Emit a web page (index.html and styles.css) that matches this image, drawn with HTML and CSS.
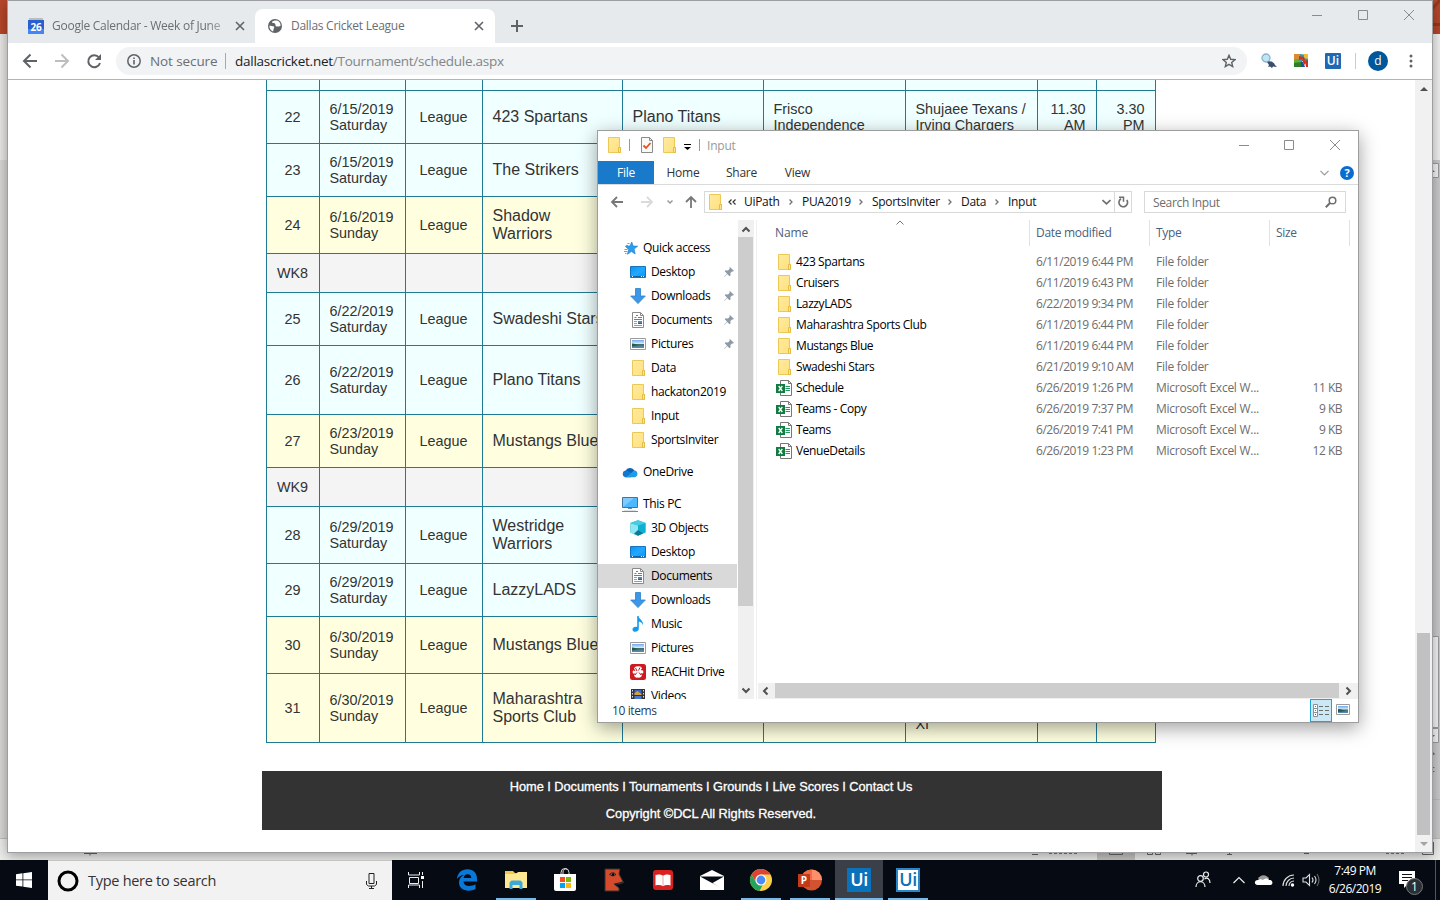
FILE: index.html
```html
<!DOCTYPE html>
<html lang="en">
<head>
<meta charset="utf-8">
<title>Dallas Cricket League</title>
<link rel="stylesheet" href="styles.css">
</head>
<body>
<svg width="0" height="0" class="defs">
  <defs>
    <linearGradient id="gFolder" x1="0" y1="0" x2="1" y2="1"><stop offset="0" stop-color="#ffeba0"/><stop offset="1" stop-color="#ffe07c"/></linearGradient>
    <linearGradient id="gBlue" x1="0" y1="0" x2="1" y2="1"><stop offset="0" stop-color="#0a93f5"/><stop offset=".5" stop-color="#22a8ff"/><stop offset="1" stop-color="#0c95f6"/></linearGradient>
    <linearGradient id="gSky" x1="0" y1="0" x2="0" y2="1"><stop offset="0" stop-color="#6fa8f0"/><stop offset=".45" stop-color="#d6e8f8"/><stop offset=".55" stop-color="#3f6f6a"/><stop offset="1" stop-color="#5b8fb8"/></linearGradient>
  </defs>
  <symbol id="folder" viewBox="0 0 16 16"><path d="M2.500.5h11v10h1v5h-12z" fill="url(#gFolder)" stroke="#ecc956"/><path d="M12.500 15.500v-5h2v5z" fill="#ffe792" stroke="#e6bd43"/></symbol>
  <symbol id="desk" viewBox="0 0 16 16"><path d="M.5 2.500h15v11H.5z" fill="url(#gBlue)" stroke="#1475bd"/><path d="M1 12.500h14" stroke="#0b66ad"/><path d="M2 12.500h1m8 0h1m1 0h1" stroke="#fff"/></symbol>
  <symbol id="down" viewBox="0 0 16 16"><path d="M5.500.5h5v7.500h4.800L8 15.600.7 8h4.800z" fill="#3c97e6" stroke="#2b7fc9" stroke-width=".8"/></symbol>
  <symbol id="doc" viewBox="0 0 16 16"><path d="M2.500.5h8l3 3v12h-11z" fill="#fff" stroke="#8a8a8a"/><path d="M10.500.5v3h3" fill="none" stroke="#8a8a8a"/><path d="M4.500 5.500h2m1.500 0h4M4 7.500h8M6 3.500h2" stroke="#2d8fd8"/><path d="M4 9.500h3m-3 2h3m-3 2h8" stroke="#9a9a9a"/><path d="M8 9h4v3H8z" fill="#4e87b5"/><path d="M8 11h4v1H8z" fill="#2f6d4a"/></symbol>
  <symbol id="pic" viewBox="0 0 16 16"><path d="M.5 2.500h15v11H.5z" fill="#fff" stroke="#9b9b9b"/><path d="M2 4h12v8H2z" fill="url(#gSky)"/><path d="M2 7.500c3 0 4 1.500 7 1.500L2 10.500z" fill="#25594b"/></symbol>
  <symbol id="cloud" viewBox="0 0 16 16"><path d="M3.500 7A5 5 0 0 1 12.500 6.500L9 10z" fill="#0b63b8"/><path d="M3.400 6.600a3.400 3.400 0 0 0-.3 6.600h6L9 8.500 5.500 6.800a4 4 0 0 0-2.100-.2z" fill="#1177cf"/><path d="M12.500 6.500a3.400 3.400 0 0 1 .2 6.700H3c3-.8 5-3.700 9.500-6.700z" fill="#1f9be8"/></symbol>
  <symbol id="pc" viewBox="0 0 16 16"><path d="M.5 1.500h15v10H.5z" fill="#4db7ff" stroke="#42759d"/><path d="M1 11V2h11z" fill="#7dcbff"/><path d="M6 12.500h4M0 15.500h16" stroke="#6c8ba5"/><path d="M2 14.500h12" stroke="#dce4ea"/></symbol>
  <symbol id="cube" viewBox="0 0 16 16"><path d="M8 .3L15.700 3v9.500L8 15.700.3 12.500V3z" fill="#0fb0d2"/><path d="M.3 3L8 5.500v10.200L.3 12.500z" fill="#8fe5f0"/><path d="M8 .3L15.700 3 8 5.500.3 3z" fill="#45cde0"/><path d="M8 10l5 3.300-5 2.400-4-2z" fill="#087a94"/></symbol>
  <symbol id="music" viewBox="0 0 16 16"><path d="M7.200 0h1.400c.5 3.600 5 4.200 4.400 9.200-.8-2-2-3.400-4.200-3.700v7.200c0 3.700-6.300 4.200-6.300.7 0-2.200 2.600-3.300 4.700-2.400z" fill="#119af2"/></symbol>
  <symbol id="reach" viewBox="0 0 16 16"><rect width="16" height="16" rx="2.500" fill="#cf1920"/><path d="M4 4.500C5 2.500 7 2 8 2.500c2-.5 3.500.5 4 2L10.500 6l2.500.5c.5 1 .5 2 0 3L10.500 9l1.500 2.500C11 13.500 9 14 8 13.500c-2 .5-3.500-.5-4-2L5.500 9.500 3 9.500c-.5-1-.5-2 0-3L5.500 7z" fill="#fff"/><path d="M5.500 4l1.500 3M10 3.500L8.500 6.500M5 11l2-2.500M11 11L9 8.500" stroke="#cf1920"/></symbol>
  <symbol id="video" viewBox="0 0 16 16"><path d="M1 1h14v15H1z" fill="#333"/><path d="M2.500 2v14M13.500 2v14" stroke="#ddd" stroke-dasharray="1.500 1.500"/><path d="M4.500 2h7v5h-7z" fill="#3b62c9"/><path d="M4.500 5l3-2 4 3v1h-7z" fill="#d2a13c"/><path d="M4.500 8h7v6h-7z" fill="#4a78cc"/></symbol>
  <symbol id="star" viewBox="0 0 16 16"><path d="M9.800 2l1.300 4 4.600.2-3.600 2.900 1.100 4.900-3.800-2.500-4 2.800 1.300-4.700L3.300 6.200l4.600-.2z" fill="#2a9df0" stroke="#1878c0" stroke-width=".6"/><path d="M5.500 3.500h2M4 5.500h2M2.500 9.500h3M2 11.500h3.500M3 13.500h1.500" stroke="#4aaeea"/></symbol>
  <symbol id="pin" viewBox="0 0 12 12"><path d="M7 1l4 4-1.200.5-.8-.1-1.600 1.700.1 2.300-1 .9-2.300-2.300L1.200 11 1 10.800 4 7.500 1.700 5.200l1-.9 2.300.1 1.700-1.700L6.500 1.700z" fill="#8d9aa5"/></symbol>
  <symbol id="excel" viewBox="0 0 16 16"><path d="M4.500.5h8l3 3v12h-11z" fill="#fff" stroke="#777"/><path d="M12.500.5v3h3" fill="none" stroke="#777"/><path d="M9.500 6.500H14M9.500 8.500H14m-4.500 2H14" stroke="#259a61"/><path d="M0 4h9v9H0z" fill="#107c41"/><path d="M2.700 6l3.600 5M6.300 6l-3.600 5" stroke="#fff" stroke-width="1.300"/></symbol>
  <symbol id="close" viewBox="0 0 10 10"><path d="M1 1l8 8M9 1L1 9" stroke="currentColor" fill="none" stroke-width="1.600"/></symbol>
  <symbol id="chev" viewBox="0 0 8 8"><path d="M2.500 1.500L5 4 2.500 6.500" fill="none" stroke="#707070" stroke-width="1.300"/></symbol>
</svg>

<div class="desktop">
  <svg class="backdrop" width="1440" height="860" viewBox="0 0 1440 860">
    <path fill="#e9e8e6" d="M0 0h1440v860H0z"/>
    <path fill="#b7472a" d="M0 0h8v34H0zM1432 0h8v34h-8z"/>
    <path d="M1432 9l8-9M1432 24.500h8" stroke="#94391f" stroke-width="3"/>
    <path fill="#d9d8d7" d="M0 160h8v678H0z"/>
    <path fill="#f2f1f0" d="M1432 34h8v126h-8z"/>
    <path fill="#cbcbcb" d="M1432 160h8v678h-8z"/>
    <path fill="#f5f5f5" stroke="#9c9c9c" d="M1425 163.500h13.500v14H1425zM1425 636.500h13.500v91H1425zM1425 728.500h13.500v14H1425z"/>
    <path fill="#666" d="M1432 169l3 3h-3zM1432 735h3l-3 3zM1432 751l3 3h-3zM1432 755h3l-3-2zM1432 767h3l-3 2zM1432 771h3l-3 2z"/>
    <path stroke="#bdbdbd" d="M0 838.500h8M1432 799.500h8M1432 838.500h8"/>
    <path fill="#ededec" d="M0 839h1440v21H0z"/>
    <path fill="#c6c5c4" d="M1097 853h38v7h-38z"/>
    <path fill="none" stroke="#666" d="M84 853.500h13m-7 0v2M1032 854.500h6M1109.500 850v4.500h13V850M1147.500 850v4.500h5V850m3 0v4.500h5V850M1186 853.500h11m-5 0v2M1227 854.500h5m-2.500 0V850M1304 853.500h5M1422.500 842v12.500h11V842"/>
    <path stroke="#777" stroke-dasharray="3 2" d="M1049 853.500h28M1386 853.500h20"/>
  </svg>

  <section class="browser">
    <div class="tabs">
      <div class="tab">
        <svg width="16" height="16" viewBox="0 0 16 16"><path fill="#bdbdbd" d="M1 0h14v2H1z"/><path fill="#2a5fd0" d="M0 2h16v11H0z"/><path fill="#4285f4" d="M0 11h16v5H0z"/><text x="8" y="12.500" text-anchor="middle" class="cal">26</text></svg>
        <span class="tab-title faded">Google Calendar - Week of June</span>
        <svg class="x" width="10" height="10"><use href="#close"/></svg>
      </div>
      <div class="tab active">
        <svg width="16" height="16" viewBox="0 0 16 16"><circle cx="8" cy="8" r="7" fill="#5f6368"/><path d="M9 2.500c-3 0-4.500 1-3.500 2.500 1.500.3 3 0 3 2s1.500 1.500 3 1.500l2-.5C14 5 12 2.500 9 2.500zM2.500 7.500L7 8.500c1 1.500-1 2-.5 3.500l-.5 1.500C3.500 12.500 2 10 2.500 7.500z" fill="#fff"/></svg>
        <span class="tab-title">Dallas Cricket League</span>
        <svg class="x" width="10" height="10"><use href="#close"/></svg>
      </div>
      <svg class="plus" width="12" height="12" viewBox="0 0 12 12"><path d="M6 0v12M0 6h12" stroke="#5f6368" stroke-width="2"/></svg>
      <svg class="wctl" width="104" height="12" viewBox="0 0 104 12"><path d="M0 6.500h10M46.500 1.500h9v9h-9zM92 1l10 10M102 1L92 11" fill="none" stroke="#8b8b8b"/></svg>
    </div>
    <div class="toolbar">
      <svg class="navs" width="80" height="16" viewBox="0 0 80 16"><path d="M15 8H2.500m6-6.500L2 8l6.500 6.500" fill="none" stroke="#5f6368" stroke-width="2"/><path d="M33 8h12.500m-6-6.500L46 8l-6.500 6.500" fill="none" stroke="#bcbec1" stroke-width="2"/><path d="M77 4.500A6 6 0 1 0 78 10" fill="none" stroke="#5f6368" stroke-width="2"/><path d="M79 1v6h-6z" fill="#5f6368"/></svg>
      <div class="omni">
        <svg width="14" height="14" viewBox="0 0 14 14"><circle cx="7" cy="7" r="6.200" fill="none" stroke="#5f6368" stroke-width="1.500"/><path d="M7 6v4.500M7 3.500V5" stroke="#5f6368" stroke-width="1.600"/></svg>
        <span class="insecure">Not secure</span><i></i>
        <span class="url"><b>dallascricket.net</b>/Tournament/schedule.aspx</span>
        <svg class="fav" width="14" height="14" viewBox="0 0 14 14"><path d="M7 1.300l1.700 4 4.300.3-3.300 2.800 1 4.200L7 10.400l-3.700 2.200 1-4.200L1 5.600l4.300-.3z" fill="none" stroke="#5f6368" stroke-width="1.400"/></svg>
      </div>
      <div class="exts">
        <svg width="16" height="16" viewBox="0 0 16 16"><circle cx="5" cy="5" r="4" fill="#bfe4f5" stroke="#8bb4ca" stroke-width="1.300"/><path d="M6 9c3-2 7 0 8 3l2 2-4-.5-1 1.500-2-1.500-2 .5 1-2z" fill="#3e4d6e"/></svg>
        <svg width="16" height="16" viewBox="0 0 16 16"><path d="M1 1h7v7H1z" fill="#dc8a33"/><path d="M1 6.500l7-1V14H1z" fill="#5fae35"/><path d="M1 10l7-1v5H1z" fill="#2f7d2b"/><path d="M7 1l8 1v6H7z" fill="#2f9bb6"/><path d="M11 1h4v5l-4-1z" fill="#efbe2c"/><path d="M6 3l5 1 2 6-2 2-2-6-3 1z" fill="#d9301e"/><path d="M8 8l2 1 2 5H8z" fill="#1c4fa0"/><path d="M12 8l3-1v7h-2z" fill="#c9301e"/></svg>
        <span class="ui-ext">Ui</span>
        <i></i>
        <span class="avatar">d</span>
        <svg width="4" height="14" viewBox="0 0 4 14"><circle cx="2" cy="2" r="1.500"/><circle cx="2" cy="7" r="1.500"/><circle cx="2" cy="12" r="1.500"/></svg>
      </div>
    </div>
    <div class="page">
      <main>
        <div class="grid">
          <div class="row r-first"><p></p><p></p><p></p><p></p><p></p><p></p><p></p><p></p><p></p></div>
          <div class="row"><p>22</p><p>6/15/2019<br>Saturday</p><p>League</p><p class="team">423 Spartans</p><p class="team">Plano Titans</p><p>Frisco<br>Independence</p><p>Shujaee Texans /<br>Irving Chargers</p><p>11.30<br>AM</p><p>3.30<br>PM</p></div>
          <div class="row"><p>23</p><p>6/15/2019<br>Saturday</p><p>League</p><p class="team">The Strikers</p><p></p><p></p><p></p><p></p><p></p></div>
          <div class="row sun tall"><p>24</p><p>6/16/2019<br>Sunday</p><p>League</p><p class="team">Shadow<br>Warriors</p><p></p><p></p><p></p><p></p><p></p></div>
          <div class="row week"><p>WK8</p><p></p><p></p><p></p><p></p><p></p><p></p><p></p><p></p></div>
          <div class="row"><p>25</p><p>6/22/2019<br>Saturday</p><p>League</p><p class="team">Swadeshi Stars</p><p></p><p></p><p></p><p></p><p></p></div>
          <div class="row taller"><p>26</p><p>6/22/2019<br>Saturday</p><p>League</p><p class="team">Plano Titans</p><p></p><p></p><p></p><p></p><p></p></div>
          <div class="row sun"><p>27</p><p>6/23/2019<br>Sunday</p><p>League</p><p class="team">Mustangs Blue</p><p></p><p></p><p></p><p></p><p></p></div>
          <div class="row week"><p>WK9</p><p></p><p></p><p></p><p></p><p></p><p></p><p></p><p></p></div>
          <div class="row tall"><p>28</p><p>6/29/2019<br>Saturday</p><p>League</p><p class="team">Westridge<br>Warriors</p><p></p><p></p><p></p><p></p><p></p></div>
          <div class="row"><p>29</p><p>6/29/2019<br>Saturday</p><p>League</p><p class="team">LazzyLADS</p><p></p><p></p><p></p><p></p><p></p></div>
          <div class="row sun tall"><p>30</p><p>6/30/2019<br>Sunday</p><p>League</p><p class="team">Mustangs Blue</p><p></p><p></p><p></p><p></p><p></p></div>
          <div class="row sun taller"><p>31</p><p>6/30/2019<br>Sunday</p><p>League</p><p class="team">Maharashtra<br>Sports Club</p><p></p><p></p><p class="third">XI</p><p></p><p></p></div>
        </div>
        <footer><div>Home I Documents I Tournaments I Grounds I Live Scores I Contact Us</div><div>Copyright ©DCL All Rights Reserved.</div></footer>
      </main>
      <div class="pagebar">
        <svg width="8" height="4" viewBox="0 0 8 4"><path d="M0 4l4-4 4 4z" fill="#505050"/></svg>
        <span></span>
        <svg width="8" height="4" viewBox="0 0 8 4"><path d="M0 0l4 4 4-4z" fill="#a3a3a3"/></svg>
      </div>
    </div>
  </section>

  <section class="explorer">
    <div class="ex-title">
      <svg class="ic" width="16" height="16"><use href="#folder"/></svg>
      <i></i>
      <svg class="chk" width="12" height="16" viewBox="0 0 12 16"><path d="M.5.5h8l3 3v12H.5z" fill="#f8f8f8" stroke="#8a8a8a"/><path d="M8.500.5v3h3" fill="none" stroke="#8a8a8a"/><path d="M2.500 8.500L5 11l4.500-5" fill="none" stroke="#e3521b" stroke-width="1.800"/></svg>
      <svg class="fold2" width="16" height="16"><use href="#folder"/></svg>
      <svg class="qat" width="7" height="6" viewBox="0 0 7 6"><path d="M0 .5h7" stroke="#000"/><path d="M0 3h7L3.500 6z"/></svg>
      <i class="sep2"></i>
      <span>Input</span>
      <svg class="wctl" width="102" height="12" viewBox="0 0 102 12"><path d="M0 6.500h10M45.500 1.500h9v9h-9zM91 1l10 10M101 1L91 11" fill="none" stroke="#8b8b8b"/></svg>
    </div>
    <div class="ribbon">
      <b>File</b><span>Home</span><span>Share</span><span>View</span>
      <svg width="9" height="6" viewBox="0 0 9 6"><path d="M.5.800L4.500 4.800 8.500.8" fill="none" stroke="#999" stroke-width="1.200"/></svg>
      <em>?</em>
    </div>
    <div class="address">
      <svg width="84" height="14" viewBox="0 0 84 14"><path d="M12 7H1m5-5L1 7l5 5" fill="none" stroke="#777" stroke-width="1.800"/><path d="M30 7h11m-5-5l5 5-5 5" fill="none" stroke="#dadada" stroke-width="1.800"/><path d="M56.500 5.500L59 8l2.500-2.500" fill="none" stroke="#999" stroke-width="1.500"/><path d="M80 13V2m-5 5l5-5 5 5" fill="none" stroke="#777" stroke-width="1.800"/></svg>
      <div class="crumbs">
        <svg width="16" height="16"><use href="#folder"/></svg>
        <svg class="dbl" width="8" height="8" viewBox="0 0 8 8"><path d="M3.500 1.500L1 4l2.500 2.500M7.500 1.500L5 4l2.500 2.500" fill="none" stroke="#333" stroke-width="1.200"/></svg>
        <span class="c1">UiPath</span><svg width="8" height="8"><use href="#chev"/></svg>
        <span class="c2">PUA2019</span><svg width="8" height="8"><use href="#chev"/></svg>
        <span class="c3">SportsInviter</span><svg width="8" height="8"><use href="#chev"/></svg>
        <span class="c4">Data</span><svg width="8" height="8"><use href="#chev"/></svg>
        <span class="c5">Input</span>
        <svg class="drop" width="9" height="6" viewBox="0 0 9 6"><path d="M.5 1L4.500 4.800 8.500 1" fill="none" stroke="#6e6e6e" stroke-width="1.700"/></svg>
        <div class="refresh"><svg width="11" height="12" viewBox="0 0 11 12"><path d="M3 2.800A4.300 4.300 0 1 0 8.800 4" fill="none" stroke="#6e6e6e" stroke-width="1.600"/><path d="M1 1.300h4.500v4.400" fill="none" stroke="#6e6e6e" stroke-width="1.500"/></svg></div>
      </div>
      <div class="search"><span>Search Input</span><svg width="12" height="12" viewBox="0 0 12 12"><circle cx="7.500" cy="4.500" r="3.300" fill="none" stroke="#6e6e6e" stroke-width="1.500"/><path d="M5 7L.8 11.200" stroke="#6e6e6e" stroke-width="2"/></svg></div>
    </div>
    <div class="ex-body">
      <nav>
        <div class="n top"><svg><use href="#star"/></svg>Quick access</div>
        <div class="n"><svg><use href="#desk"/></svg>Desktop<svg class="pin"><use href="#pin"/></svg></div>
        <div class="n"><svg><use href="#down"/></svg>Downloads<svg class="pin"><use href="#pin"/></svg></div>
        <div class="n"><svg><use href="#doc"/></svg>Documents<svg class="pin"><use href="#pin"/></svg></div>
        <div class="n"><svg><use href="#pic"/></svg>Pictures<svg class="pin"><use href="#pin"/></svg></div>
        <div class="n"><svg><use href="#folder"/></svg>Data</div>
        <div class="n"><svg><use href="#folder"/></svg>hackaton2019</div>
        <div class="n"><svg><use href="#folder"/></svg>Input</div>
        <div class="n"><svg><use href="#folder"/></svg>SportsInviter</div>
        <div class="n top gap"><svg><use href="#cloud"/></svg>OneDrive</div>
        <div class="n top gap"><svg><use href="#pc"/></svg>This PC</div>
        <div class="n"><svg><use href="#cube"/></svg>3D Objects</div>
        <div class="n"><svg><use href="#desk"/></svg>Desktop</div>
        <div class="n sel"><svg><use href="#doc"/></svg>Documents</div>
        <div class="n"><svg><use href="#down"/></svg>Downloads</div>
        <div class="n"><svg><use href="#music"/></svg>Music</div>
        <div class="n"><svg><use href="#pic"/></svg>Pictures</div>
        <div class="n"><svg><use href="#reach"/></svg>REACHit Drive</div>
        <div class="n"><svg><use href="#video"/></svg>Videos</div>
      </nav>
      <div class="vbar">
        <svg width="10" height="7" viewBox="0 0 10 7"><path d="M1.500 5.500L5 2l3.500 3.500" fill="none" stroke="#505050" stroke-width="2"/></svg>
        <span></span>
        <svg width="10" height="7" viewBox="0 0 10 7"><path d="M1.500 1.500L5 5l3.500-3.500" fill="none" stroke="#505050" stroke-width="2"/></svg>
      </div>
      <div class="files">
        <div class="head"><span>Name<svg width="8" height="5" viewBox="0 0 8 5"><path d="M.5 4.500L4 1l3.500 3.500" fill="none" stroke="#777"/></svg></span><span>Date modified</span><span>Type</span><span>Size</span></div>
        <div class="list">
          <div class="f"><span><svg><use href="#folder"/></svg>423 Spartans</span><span>6/11/2019 6:44 PM</span><span>File folder</span><span></span></div>
          <div class="f"><span><svg><use href="#folder"/></svg>Cruisers</span><span>6/11/2019 6:43 PM</span><span>File folder</span><span></span></div>
          <div class="f"><span><svg><use href="#folder"/></svg>LazzyLADS</span><span>6/22/2019 9:34 PM</span><span>File folder</span><span></span></div>
          <div class="f"><span><svg><use href="#folder"/></svg>Maharashtra Sports Club</span><span>6/11/2019 6:44 PM</span><span>File folder</span><span></span></div>
          <div class="f"><span><svg><use href="#folder"/></svg>Mustangs Blue</span><span>6/11/2019 6:44 PM</span><span>File folder</span><span></span></div>
          <div class="f"><span><svg><use href="#folder"/></svg>Swadeshi Stars</span><span>6/21/2019 9:10 AM</span><span>File folder</span><span></span></div>
          <div class="f"><span><svg><use href="#excel"/></svg>Schedule</span><span>6/26/2019 1:26 PM</span><span>Microsoft Excel W...</span><span>11 KB</span></div>
          <div class="f"><span><svg><use href="#excel"/></svg>Teams - Copy</span><span>6/26/2019 7:37 PM</span><span>Microsoft Excel W...</span><span>9 KB</span></div>
          <div class="f"><span><svg><use href="#excel"/></svg>Teams</span><span>6/26/2019 7:41 PM</span><span>Microsoft Excel W...</span><span>9 KB</span></div>
          <div class="f"><span><svg><use href="#excel"/></svg>VenueDetails</span><span>6/26/2019 1:23 PM</span><span>Microsoft Excel W...</span><span>12 KB</span></div>
        </div>
        <div class="hbar">
          <svg width="7" height="10" viewBox="0 0 7 10"><path d="M5.500 1.500L2 5l3.500 3.500" fill="none" stroke="#505050" stroke-width="2"/></svg>
          <span></span>
          <svg width="7" height="10" viewBox="0 0 7 10"><path d="M1.500 1.500L5 5 1.500 8.500" fill="none" stroke="#505050" stroke-width="2"/></svg>
        </div>
      </div>
    </div>
    <div class="status">
      <span>10 items</span>
      <div class="details"><svg width="16" height="13" viewBox="0 0 16 13"><path d="M.5.5h4v4h-4zM.5 4.500h4v4h-4zM.5 8.500h4v4h-4z" fill="#fff" stroke="#8f8f8f"/><path d="M6 2.500h4m2 0h4m-10 4h4m2 0h4m-10 4h4m2 0h4" stroke="#6d6d6d"/><path d="M2 2.500h1" stroke="#3c8f5a"/><path d="M2 6.500h1" stroke="#2f80e0"/><path d="M2 10.500h1" stroke="#d22"/></svg></div>
      <svg class="thumbs" width="14" height="11" viewBox="0 0 14 11"><path d="M.5.5h13v10H.5z" fill="#fff" stroke="#9b9b9b"/><path d="M2 2h10v7H2z" fill="url(#gSky)"/><path d="M2 5c3 0 5 1.500 8 2L2 8z" fill="#25594b"/></svg>
    </div>
  </section>

  <div class="taskbar">
    <div class="cell"><svg width="16" height="16" viewBox="0 0 16 16"><path fill="#fff" d="M0 2.200l6.500-.9v6.200H0zM7.300 1.200L16 0v7.500H7.300zM0 8.300h6.500v6.300L0 13.700zM7.300 8.300H16V16l-8.700-1.200z"/></svg></div>
    <div class="ask"><svg width="22" height="22" viewBox="0 0 22 22"><circle cx="11" cy="11" r="9" fill="none" stroke="#000" stroke-width="3"/></svg><span>Type here to search</span><svg width="11" height="16" viewBox="0 0 11 16"><path d="M3 .5h5v10H3zM.5 8v3.500l2 1.500h6l2-1.500V8M5.500 13v2.500M3 15.500h5" fill="none" stroke="#222"/></svg></div>
    <div class="cell tv"><svg width="17" height="16" viewBox="0 0 17 16"><path d="M.5 0v3h11V0M1.500 5.500h9v6h-9zM.5 16v-3h11v3M14.500 0v3M14.500 9v7" fill="none" stroke="#eee"/><path fill="#fff" d="M13 4h3v3h-3z"/></svg></div>
    <div class="cell"><svg width="22" height="22" viewBox="0 0 22 22"><path fill="#0a78d7" d="M1 10C1.500 4 5.500.3 11.500.3c6 0 9.500 4 9.500 9.500v2.700H7.500c.2 3 2.500 4.500 5.700 4.500 2.300 0 4.500-.6 6.300-1.700v4.800c-2 1-4.300 1.600-7 1.600C7 21.700 3 18.500 3 13.500c0-3.500 1.800-6.200 5-7.600C5 6 2.500 7.500 1 10zm6.600-.9h7.700c0-2.500-1.200-3.800-3.700-3.800-2.200 0-3.700 1.400-4 3.800z"/></svg></div>
    <div class="cell run"><svg width="22" height="20" viewBox="0 0 22 20"><path fill="#f7c843" d="M0 1h8l2 2h12v5H0z"/><path fill="#ffe892" d="M0 4h11l2-2h9v16H0z"/><path fill="#40a8d8" d="M4.500 19v-6.500l2-2h9l2 2V19h-3v-4h-7v4z"/></svg></div>
    <div class="cell"><svg width="24" height="24" viewBox="0 0 24 24"><path d="M8 7V4.500a3.700 3.700 0 0 1 8 0V7M10 7V4a3 3 0 0 1 4-3" fill="none" stroke="#ddd"/><path d="M1 6h22v15q0 2-2 2H3q-2 0-2-2z" fill="#fff"/><path fill="#f25022" d="M7 9h5v5H7z"/><path fill="#7fba00" d="M13 9h5v5h-5z"/><path fill="#00a4ef" d="M7 15h5v5H7z"/><path fill="#ffb900" d="M13 15h5v5h-5z"/></svg></div>
    <div class="cell"><svg width="20" height="24" viewBox="0 0 20 24"><path fill="#d54b2c" stroke="#333" d="M1 1h15l-1 5 4.500 8.500-4.500 1.500H10l5 4v3H1z"/><path d="M5.500 6.500q3-3.500 6.500 0-3 3-6.500 0z" fill="#8a8a8a" stroke="#222"/><circle cx="9" cy="6.500" r="1.200"/><path d="M11 16l8-2" stroke="#222"/></svg></div>
    <div class="cell"><svg width="20" height="20" viewBox="0 0 20 20"><rect width="20" height="20" rx="3" fill="#d9211f"/><path fill="#fff" d="M2.500 5c3-1 5.500-.5 7.500.8 2-1.300 4.500-1.800 7.500-.8v10.500c-3-.8-5.500-.5-7.500.7-2-1.200-4.500-1.500-7.500-.7z"/><path d="M10 6v10" stroke="#e9aaaa"/></svg></div>
    <div class="cell"><svg width="24" height="20" viewBox="0 0 24 20"><path fill="#fff" d="M0 6L12 0l12 6v14H0z"/><path fill="#070c14" d="M0 6.500h24L12.500 13l6 3.500z"/></svg></div>
    <div class="cell run"><svg width="22" height="22" viewBox="0 0 22 22"><circle cx="11" cy="11" r="11" fill="#fcd04b"/><path fill="#dc4535" d="M1.500 5.500A11 11 0 0 1 20.500 5.500H11a5.500 5.500 0 0 0-5 7.700z"/><path fill="#25a35b" d="M1.500 5.500l4.700 8.200A5.500 5.500 0 0 0 12.500 16L9.600 22A11 11 0 0 1 1.500 5.500z"/><circle cx="11" cy="11" r="5.500" fill="#fff"/><circle cx="11" cy="11" r="4.400" fill="#4c8bf5"/></svg></div>
    <div class="cell run"><svg width="24" height="22" viewBox="0 0 24 22"><circle cx="13.500" cy="11" r="10.500" fill="#d35230"/><path fill="#ff8f6b" d="M13.500.5A10.500 10.500 0 0 1 24 11H13.500z"/><path fill="#ed6c47" d="M13.500.5V11H3A10.500 10.500 0 0 1 13.500.5z"/><path fill="#c13b1b" d="M0 5h12v13H0z"/><text x="6" y="15" text-anchor="middle" class="ppt">P</text></svg></div>
    <div class="cell run on"><span class="ui">Ui</span></div>
    <div class="cell run"><span class="ui inv">Ui</span></div>
    <div class="tray">
      <svg width="132" height="20" viewBox="0 0 132 20"><g fill="none" stroke="#eee" stroke-width="1.200"><circle cx="5.500" cy="8.500" r="2.800"/><path d="M1 17c0-7 9-7 9 0"/><circle cx="11" cy="4.500" r="2.500"/><path d="M9.500 9c3-2 5.500 0 5.500 4"/><path d="M38.500 13l5.500-5.500 5.500 5.500"/></g><path fill="#9a9a9a" d="M63 9c2-5 9-5 11 0l-6 4z"/><path fill="#fff" d="M62 15c-3-.5-3-5 1-5 2-1.500 4-.5 5 0 2-2 5-2 6 0 4-.5 4.500 4.500 1.500 5z"/><g fill="none" stroke="#ddd" stroke-width="1.100"><path d="M88 16c0-6 5-11 11-11M91 16c0-4 3.500-8 8-8M94 16c0-3 2-5 5-5"/><path d="M108 8h3l3.500-3.500v11L111 12h-3z"/><path d="M117 7.500q2 2.500 0 5M119.500 6q3 4 0 8"/><path d="M122 4q4 6 0 12" stroke="#666"/></g><circle cx="97.500" cy="15" r="1.700" fill="#fff"/></svg>
      <div class="clock">7:49 PM<br>6/26/2019</div>
      <div class="note"><svg width="18" height="18" viewBox="0 0 18 18"><path fill="#fff" d="M0 0h16v13H9l-4 4v-4H0z"/><path d="M3 3.500h10M3 6.500h10M3 9.500h6" stroke="#111"/></svg><span>1</span></div>
      <i></i>
    </div>
  </div>
</div>
</body>
</html>
```
FILE: styles.css
```css
* { box-sizing: border-box; }
body { margin: 0; overflow: hidden; font-family: "Open Sans", "Noto Sans", sans-serif; }
p { margin: 0; }
svg { display: block; flex: none; }
.defs { position: absolute; }
.desktop { position: relative; width: 1440px; height: 900px; overflow: hidden; }
.backdrop { position: absolute; left: 0; top: 0; }

/* browser window */
.browser { position: absolute; left: 7px; top: 0; width: 1426px; height: 853px; border: 1px solid #9c9ea1; background: #fff; box-shadow: 0 3px 12px rgba(0,0,0,.35); display: flex; flex-direction: column; }
.tabs { height: 42px; background: #e7eaed; display: flex; align-items: flex-start; padding-top: 8px; flex: none; }
.tab { width: 247px; height: 34px; display: flex; align-items: center; padding: 0 10px 0 20px; font-size: 12px; color: #6b6e72; letter-spacing: -.26px; }
.tab.active { width: 240px; background: #fff; border-radius: 8px 8px 0 0; padding: 0 11px 0 12px; }
.tab-title { margin-left: 8px; flex: 1; white-space: nowrap; overflow: hidden; padding-bottom: 1px; }
.faded { -webkit-mask-image: linear-gradient(90deg, #000 88%, transparent 106%); mask-image: linear-gradient(90deg, #000 88%, transparent 106%); }
.x { color: #5f6368; margin-left: 8px; }
.cal { font: bold 10px "Open Sans", sans-serif; fill: #fff; }
.plus { margin: 11px 0 0 16px; }
.tabs .wctl { margin: 0 16px 0 auto; }
.toolbar { height: 37px; display: flex; align-items: center; border-bottom: 1px solid #b4b4b4; padding-left: 14px; flex: none; }
.omni { margin-left: 14px; width: 1131px; height: 28px; border-radius: 14px; background: #f1f3f4; display: flex; align-items: center; padding: 0 11px; font-size: 13.500px; color: #6b6e72; letter-spacing: -.1px; }
.insecure { margin-left: 9px; width: 68px; white-space: nowrap; }
.omni i { width: 1px; height: 16px; background: #a5a8ac; margin: 0 9px 0 7px; }
.url { color: #80868b; letter-spacing: -.25px; }
.url b { font-weight: 400; color: #202124; }
.fav { margin-left: auto; }
.exts { display: flex; align-items: center; margin-left: 14px; fill: #5f6368; }
.exts svg + svg { margin-left: 16px; }
.ui-ext { width: 16px; height: 16px; background: #1f69b4; color: #fff; border-radius: 1px; font: 600 12px/16px "Open Sans", sans-serif; text-align: center; margin-left: 16px; }
.exts i { width: 1px; height: 16px; background: #ccc; margin: 0 12px 0 14px; }
.avatar { width: 20px; height: 20px; border-radius: 50%; background: #01579b; color: #fff; font-size: 12px; line-height: 19px; text-align: center; }
.exts .avatar + svg { margin-left: 21px; }

/* schedule page */
.page { display: flex; flex: 1; min-height: 0; }
main { width: 1407px; padding-left: 254px; overflow: hidden; background: #fff; }
.grid { width: 890px; margin-left: 4px; border-left: 1px solid #1f7a94; font: 14.400px/16px "Liberation Sans", Arial, sans-serif; color: #333; }
.row { display: grid; grid-template-columns: 53px 86px 77px 140px 141px 142px 132px 59px 59px; height: 53px; background: #f0ffff; }
.row p { border-right: 1px solid #1f7a94; border-bottom: 1px solid #1f7a94; display: flex; align-items: center; padding-left: 9.500px; white-space: nowrap; overflow: hidden; }
.row p:nth-child(1), .row p:nth-child(3) { justify-content: center; padding: 0 1px 0 0; }
.row p:nth-child(n+8) { justify-content: flex-end; text-align: right; padding: 0 10.500px 0 0; }
.row .team { font-size: 16px; line-height: 18px; }
.r-first { height: 11px; }
.sun { background: #ffffe0; }
.tall { height: 57px; }
.taller { height: 69px; }
.week { height: 39px; background: #f4f4f4; }
.row .third { align-items: flex-end; padding-bottom: 10px; }
footer { margin-top: 28px; width: 900px; height: 59px; background: #333; color: #fff; font: 12.800px/27px "Liberation Sans", Arial, sans-serif; text-align: center; padding-top: 2px; letter-spacing: -.04px; -webkit-text-stroke: .3px #fff; }
footer div { padding-right: 2px; }
.pagebar { width: 17px; background: #f1f1f1; display: flex; flex-direction: column; align-items: center; padding: 7px 0 6px; }
.pagebar span { width: 13px; height: 202px; background: #c1c1c1; margin: auto 0 7px; }

/* file explorer window */
.explorer { position: absolute; left: 597px; top: 130px; width: 762px; height: 593px; background: #fff; border: 1px solid #9d9d9d; box-shadow: 0 5px 18px rgba(0,0,0,.38); display: flex; flex-direction: column; font-size: 12px; letter-spacing: -.22px; color: #111; }
.ex-title { height: 30px; display: flex; align-items: center; padding: 0 17px 2px 8px; color: #999; flex: none; }
.ex-title i { width: 1px; height: 12px; background: #999; margin: 0 11px 0 7px; }
.ex-title .fold2 { margin-left: 8px; }
.qat { margin: 3px 0 0 7px; }
.ex-title .sep2 { margin: 0 7px 0 8px; }
.ex-title .wctl { margin-left: auto; }
.ribbon { height: 24px; border-bottom: 1px solid #dadbdc; display: flex; align-items: center; flex: none; color: #333; padding-right: 4px; }
.ribbon b { width: 56px; height: 23px; background: #1979ca; color: #fff; font-weight: 400; text-align: center; line-height: 24px; }
.ribbon span { width: 59px; text-align: center; }
.ribbon span:nth-child(2) { width: 58px; }
.ribbon span:nth-child(4) { width: 53px; }
.ribbon svg { margin-left: auto; }
.ribbon em { width: 14px; height: 14px; border-radius: 50%; background: #0a6cce; color: #fff; font: bold 11px/14px "Open Sans", sans-serif; text-align: center; margin-left: 11px; }
.address { height: 35px; display: flex; padding: 6px 12px 0 13px; flex: none; }
.address > svg { margin-top: 4px; overflow: visible; }
.crumbs { margin-left: 9px; width: 428px; height: 22px; border: 1px solid #d9d9d9; display: flex; align-items: center; padding-left: 2px; }
.dbl { margin: 0 8px 0 5px; }
.crumbs span { white-space: nowrap; letter-spacing: -.3px; padding-bottom: 1px; }
.crumbs .c1 { margin-right: 6px; }
.crumbs span + svg { margin: 0 7px 0 0; }
.c1 { width: 37px; } .c2 { width: 55px; } .c3 { width: 74px; } .c4 { width: 32px; }
.crumbs .drop { margin-left: auto; margin-right: 3px; }
.refresh { width: 17px; height: 20px; border-left: 1px solid #d9d9d9; display: flex; align-items: center; justify-content: center; }
.search { margin-left: 12px; width: 202px; height: 22px; border: 1px solid #d9d9d9; display: flex; align-items: center; justify-content: space-between; padding: 0 8px; color: #6d6d6d; letter-spacing: -.35px; }
.ex-body { display: flex; height: 479px; flex: none; }
nav { width: 140px; overflow: hidden; padding-top: 16px; }
.n { height: 24px; width: 139px; display: flex; align-items: center; padding: 0 0 2px 32px; white-space: nowrap; letter-spacing: -.34px; color: #000; }
.n svg { width: 16px; height: 16px; margin: 2px 5px 0 0; }
.n.top { padding-left: 24px; }
.n.gap { margin-top: 8px; }
.n.sel { background: #d9d9d9; }
.n .pin { width: 12px; height: 12px; margin: 2px 2px 0 auto; }
.vbar { width: 16px; background: #f0f0f0; display: flex; flex-direction: column; align-items: center; padding: 6px 1px 5px 0; }
.vbar span { width: 15px; height: 369px; background: #cdcdcd; margin: 4px 0 auto; }
.files { flex: 1; margin-left: 2px; border-left: 1px solid #f0f0f0; padding-left: 1px; display: flex; flex-direction: column; }
.head { height: 26px; display: grid; grid-template-columns: 272px 120px 120px 80px; color: #4c607a; }
.head span { border-right: 1px solid #e2e2e2; padding-left: 6px; line-height: 26px; position: relative; letter-spacing: -.3px; }
.head span:first-child { padding-left: 17px; letter-spacing: -.1px; }
.head svg { position: absolute; left: 138px; top: 0; }
.list { padding-top: 5px; }
.f { height: 21px; display: grid; grid-template-columns: 272px 120px 120px 80px; color: #6d6d6d; line-height: 21px; white-space: nowrap; }
.f span { padding-left: 6px; letter-spacing: -.26px; }
.f span:nth-child(2) { letter-spacing: -.45px; }
.f span:first-child { display: flex; align-items: center; padding-left: 18px; color: #000; letter-spacing: -.4px; }
.f svg { width: 16px; height: 16px; margin-right: 4px; }
.f span:last-child { text-align: right; padding-right: 8px; letter-spacing: -.5px; }
.hbar { margin-top: auto; height: 16px; background: #f0f0f0; display: flex; align-items: flex-start; justify-content: space-between; padding: 0 6px 0 4px; }
.hbar svg { margin-top: 3px; }
.hbar span { width: 564px; height: 15px; background: #cdcdcd; }
.status { height: 23px; display: flex; align-items: center; padding-left: 14px; color: #1e3c5c; letter-spacing: -.4px; }
.details { margin-left: auto; width: 22px; height: 23px; border: 1px solid #26a0da; background: #cbe8f6; display: flex; align-items: center; justify-content: center; }
.thumbs { margin: 0 8px 2px 4px; }

/* taskbar */
.taskbar { position: absolute; left: 0; top: 860px; width: 1440px; height: 40px; background: #060b13; display: flex; color: #fff; }
.cell { width: 48px; height: 40px; margin-right: 1px; display: flex; align-items: center; justify-content: center; position: relative; flex: none; }
.cell:first-child { margin: 0; }
.cell.tv { margin-right: 3px; }
.run::after { content: ""; position: absolute; left: 4px; right: 4px; bottom: 0; height: 2px; background: #76b9ed; }
.run.on { background: #3b4048; }
.run.on::after { left: 0; right: 0; }
.ask { width: 344px; background: #f2f2f2; border-top: 1px solid #c4c4c4; display: flex; align-items: center; padding: 0 15px 0 9px; color: #333; font-size: 14.500px; letter-spacing: -.28px; }
.ask span { margin: 0 auto 0 9px; }
.ppt { font: bold 10px "Open Sans", sans-serif; fill: #fff; }
.ui { width: 24px; height: 24px; background: #0a72bb; font: 600 18px/23px "Open Sans", sans-serif; text-align: center; letter-spacing: -.5px; }
.ui.inv { background: #fff; color: #0a72bb; border: 2px solid #2b86c9; line-height: 19px; }
.tray { margin-left: auto; display: flex; align-items: center; }
.clock { width: 64px; text-align: center; font-size: 12px; line-height: 18px; letter-spacing: -.5px; margin-left: -4px; }
.note { position: relative; margin-left: 12px; width: 36px; height: 18px; }
.note span { position: absolute; left: 7px; top: 7px; width: 17px; height: 17px; border-radius: 50%; background: #2b2f35; border: 1px solid #777; font-size: 12px; line-height: 15px; text-align: center; }
.tray i { width: 1px; height: 40px; background: #555; margin-right: 4px; }
```
